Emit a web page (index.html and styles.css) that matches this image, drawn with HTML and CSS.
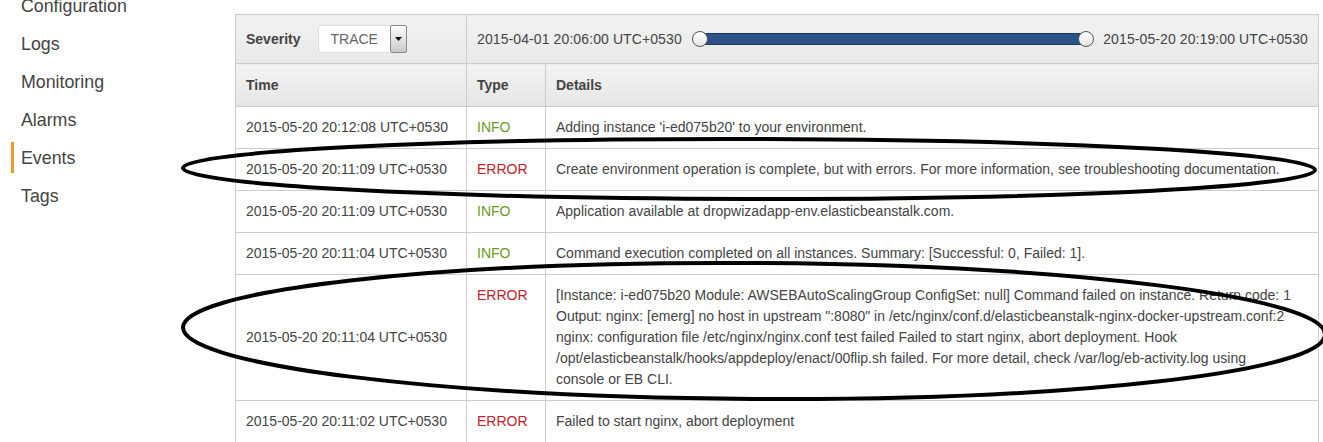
FILE: index.html
```html
<!DOCTYPE html>
<html lang="en">
<head>
<meta charset="utf-8">
<title>Events</title>
<link rel="stylesheet" href="styles.css">
</head>
<body>
<div class="page">
  <nav class="sidebar">
    <a class="nav-item" href="#">Configuration</a>
    <a class="nav-item" href="#">Logs</a>
    <a class="nav-item" href="#">Monitoring</a>
    <a class="nav-item" href="#">Alarms</a>
    <a class="nav-item active" href="#">Events</a>
    <a class="nav-item" href="#">Tags</a>
  </nav>
  <main class="main">
    <table class="events">
      <colgroup>
        <col class="c-time">
        <col class="c-type">
        <col class="c-details">
      </colgroup>
      <thead>
        <tr class="filter-row">
          <td class="filter-sev">
            <div class="sev">
              <span class="sev-label">Severity</span>
              <div class="select">
                <span class="select-value">TRACE</span>
                <span class="select-btn"><svg width="7" height="4" viewBox="0 0 7 4"><path d="M0 0h7L3.5 4z" fill="#111"/></svg></span>
              </div>
            </div>
          </td>
          <td class="filter-range" colspan="2">
            <div class="range">
              <span class="range-date">2015-04-01 20:06:00 UTC+0530</span>
              <div class="slider">
                <span class="handle"></span>
                <span class="bar"></span>
                <span class="handle"></span>
              </div>
              <span class="range-date">2015-05-20 20:19:00 UTC+0530</span>
            </div>
          </td>
        </tr>
        <tr class="head-row">
          <th>Time</th>
          <th>Type</th>
          <th>Details</th>
        </tr>
      </thead>
      <tbody>
        <tr>
          <td class="t-time">2015-05-20 20:12:08 UTC+0530</td>
          <td class="t-type info">INFO</td>
          <td class="t-details">Adding instance 'i-ed075b20' to your environment.</td>
        </tr>
        <tr>
          <td class="t-time">2015-05-20 20:11:09 UTC+0530</td>
          <td class="t-type error">ERROR</td>
          <td class="t-details">Create environment operation is complete, but with errors. For more information, see troubleshooting documentation.</td>
        </tr>
        <tr>
          <td class="t-time">2015-05-20 20:11:09 UTC+0530</td>
          <td class="t-type info">INFO</td>
          <td class="t-details">Application available at dropwizadapp-env.elasticbeanstalk.com.</td>
        </tr>
        <tr>
          <td class="t-time">2015-05-20 20:11:04 UTC+0530</td>
          <td class="t-type info">INFO</td>
          <td class="t-details">Command execution completed on all instances. Summary: [Successful: 0, Failed: 1].</td>
        </tr>
        <tr>
          <td class="t-time">2015-05-20 20:11:04 UTC+0530</td>
          <td class="t-type error">ERROR</td>
          <td class="t-details">[Instance: i-ed075b20 Module: AWSEBAutoScalingGroup ConfigSet: null] Command failed on instance. Return code: 1 Output: nginx: [emerg] no host in upstream ":8080" in /etc/nginx/conf.d/elasticbeanstalk-nginx-docker-upstream.conf:2 nginx: configuration file /etc/nginx/nginx.conf test failed Failed to start nginx, abort deployment. Hook /opt/elasticbeanstalk/hooks/appdeploy/enact/00flip.sh failed. For more detail, check /var/log/eb-activity.log using console or EB CLI.</td>
        </tr>
        <tr>
          <td class="t-time">2015-05-20 20:11:02 UTC+0530</td>
          <td class="t-type error">ERROR</td>
          <td class="t-details">Failed to start nginx, abort deployment</td>
        </tr>
      </tbody>
    </table>
  </main>
  <svg class="annotations" width="1323" height="442" viewBox="0 0 1323 442" aria-hidden="true">
    <ellipse cx="749" cy="169" rx="566" ry="30" transform="rotate(0.1 749 169)" fill="none" stroke="#000" stroke-width="4"/>
    <ellipse cx="754" cy="331" rx="571" ry="68" transform="rotate(0.35 754 331)" fill="none" stroke="#000" stroke-width="4"/>
  </svg>
</div>
</body>
</html>
```
FILE: styles.css
```css
* { box-sizing: border-box; }

html, body {
  margin: 0;
  background: #fff;
}

body {
  font-family: "Liberation Sans", Arial, sans-serif;
  color: #444;
}

.page {
  position: relative;
  display: flex;
  width: 1323px;
  height: 442px;
  overflow: hidden;
}

/* Sidebar */
.sidebar {
  width: 235px;
  flex: none;
  margin-top: -13px;
  display: flex;
  flex-direction: column;
}

.nav-item {
  position: relative;
  display: block;
  height: 38px;
  line-height: 38px;
  padding-left: 21px;
  font-size: 17.8px;
  color: #444;
  text-decoration: none;
}

.nav-item.active::before {
  content: "";
  position: absolute;
  left: 11px;
  top: 3px;
  width: 3px;
  height: 31px;
  background: #eb9a2d;
}

/* Main table */
.main {
  flex: 1;
  padding-top: 14px;
}

.events {
  width: 1084px;
  border-collapse: collapse;
  table-layout: fixed;
  font-size: 14px;
  color: #444;
}

.c-time { width: 231px; }
.c-type { width: 79px; }

.events td,
.events th {
  border: 1px solid #ccc;
}

.filter-row td {
  height: 49px;
  padding: 0 10px;
  vertical-align: middle;
  background: linear-gradient(#f2f2f2, #e9e9e9);
}

.sev {
  display: flex;
  align-items: center;
  gap: 18px;
}

.sev-label {
  font-weight: bold;
  color: #444;
}

.select {
  display: flex;
  width: 89px;
  height: 28px;
  background: #fff;
}

.select-value {
  flex: 1;
  padding-left: 11px;
  line-height: 26px;
  color: #666;
  border: 1px solid #ddd;
  border-right: none;
  border-radius: 3px 0 0 3px;
}

.select-btn {
  width: 17px;
  display: flex;
  align-items: center;
  justify-content: center;
  border: 1px solid #888;
  border-radius: 2px;
  background: linear-gradient(#fdfdfd, #c9c9c9);
}

.range {
  display: flex;
  align-items: center;
}

.range-date {
  white-space: nowrap;
  letter-spacing: 0.1px;
}

.slider {
  flex: 1;
  display: flex;
  align-items: center;
  margin: 0 9px 0 10px;
}

.handle {
  position: relative;
  z-index: 1;
  width: 16px;
  height: 16px;
  flex: none;
  border-radius: 50%;
  border: 1px solid #555;
  background: linear-gradient(#fff, #e6e6e6);
}

.bar {
  flex: 1;
  height: 12px;
  margin: 0 -8px;
  background: #2c5288;
  border: 1px solid #1d3a63;
}

.head-row th {
  height: 43px;
  padding: 0 10px;
  text-align: left;
  font-weight: bold;
  color: #444;
  vertical-align: middle;
  background: linear-gradient(#f3f3f3, #e6e6e6);
}

tbody td {
  padding: 10px 10px;
  line-height: 21px;
  vertical-align: top;
}

tbody td.t-details {
  padding-right: 24px;
}

tbody td.t-time {
  vertical-align: middle;
  white-space: nowrap;
}

.info { color: #6c9b22; }
.error { color: #c1232b; }

/* Hand-drawn annotation marks */
.annotations {
  position: absolute;
  left: 0;
  top: 0;
  pointer-events: none;
}
```
